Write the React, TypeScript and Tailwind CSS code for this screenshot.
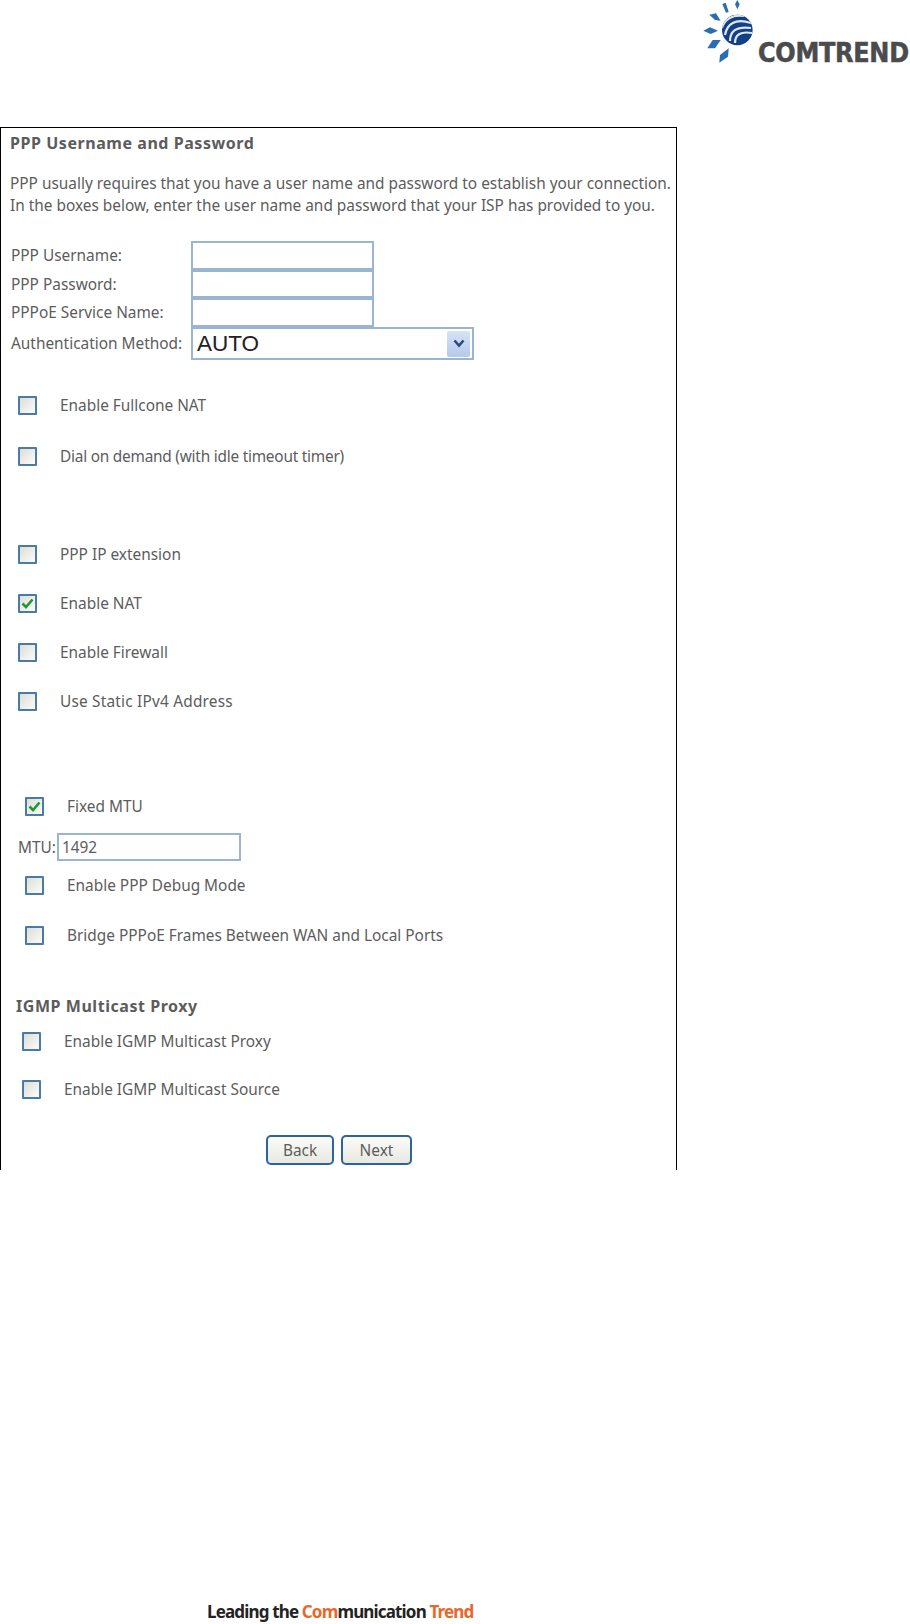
const FONT = "font-['Noto_Sans',sans-serif]";

function Box({ checked }: { checked?: boolean }) {
  return (
    <div className="w-[19px] h-[19px] shrink-0 border-2 border-[#4a7aa6] rounded-[1px] bg-gradient-to-br from-[#deded8] to-[#fbfbf9] flex items-center justify-center">
      {checked && (
        <svg width="13" height="11" viewBox="0 0 13 11">
          <path d="M1.5 5.5 L5 9 L11.5 1.5" fill="none" stroke="#1f9a2e" strokeWidth="2.6" />
        </svg>
      )}
    </div>
  );
}

function CheckRow({ label, checked, className, textClass }: { label: string; checked?: boolean; className: string; textClass?: string }) {
  return (
    <div className={`h-[30px] flex items-center ${className}`}>
      <Box checked={checked} />
      <span className={`ml-[23px] pt-px ${textClass ?? ""}`}>{label}</span>
    </div>
  );
}

function Field({ className }: { className?: string }) {
  return (
    <input
      readOnly
      className={`block bg-white border-2 border-[#9ab5d2] outline-none ${className ?? ""}`}
    />
  );
}

function Btn({ label, className }: { label: string; className: string }) {
  return (
    <div
      className={`h-[30px] pt-[2px] flex items-center justify-center rounded-[5px] border-2 border-[#2f6496] bg-gradient-to-b from-[#fafaf8] to-[#e9e9e2] ${className}`}
    >
      {label}
    </div>
  );
}

function Sun() {
  return (
    <svg width="56" height="66" viewBox="0 0 56 66" className="shrink-0">
      <defs>
        <clipPath id="globe">
          <circle cx="35.3" cy="30" r="15.3" />
        </clipPath>
      </defs>
      <g fill="#2a6db5">
        <polygon points="35.3,0 37.7,4.3 35.3,9.3 33,4.3" />
        <polygon points="20.3,4 23.7,2.7 26.7,12 24,12.7" />
        <polygon points="7.3,14.7 14,13.3 18.7,20.7 13,20" />
        <polygon points="1.3,30.7 8,27.3 16,30.7 8.7,34" />
        <polygon points="5.3,48.3 10.7,40 18.7,40 13,48.3" />
        <polygon points="17.3,62.7 18,55 26.7,48.3 26,56.7" />
      </g>
      <circle cx="35.3" cy="30" r="15.3" fill="#123f86" />
      <g clipPath="url(#globe)" fill="none" stroke="#dfe6ee" strokeWidth="2.2">
        <path d="M23 35 C25 24 33 18 49 23" />
        <path d="M28 41 C28 32 33 26 49 28" />
        <path d="M33 43 C33 35 38 31 50 33" />
        <path d="M20 28 C22 20 30 14 42 16" />
      </g>
    </svg>
  );
}

export default function App() {
  return (
    <div className={`w-[910px] h-[1624px] overflow-hidden bg-white text-[15.4px] leading-[20px] text-[#5c5c5c] ${FONT}`}>
      <header className="h-[127px] flex justify-end items-start">
        <Sun />
        <div className="w-[152px] mt-[39px] text-[#4b4b4d] text-[24px] leading-[28px] font-bold font-['DejaVu_Sans',sans-serif] tracking-[-0.3px] [-webkit-text-stroke:0.5px_#4b4b4d] scale-y-[1.14] whitespace-nowrap">
          COMTREND
        </div>
      </header>

      <main className="w-[677px] h-[1043px] border-l border-t border-r border-black">
        <div className="h-[28px] pt-px pl-[9px] flex items-center font-bold text-[16px] tracking-[0.55px]">PPP Username and Password</div>
        <p className="mt-[17px] pl-[9px] leading-[22px] whitespace-nowrap">
          PPP usually requires that you have a user name and password to establish your connection.
          <br />
          In the boxes below, enter the user name and password that your ISP has provided to you.
        </p>

        <div className="mt-[24px] pl-[10px] grid grid-cols-[180px_auto] justify-start">
          <div className="h-[29px] pt-px flex items-center">PPP Username:</div>
          <Field className="w-[183px] h-[29px]" />
          <div className="h-[28px] pt-px flex items-center">PPP Password:</div>
          <Field className="w-[183px] h-[28px]" />
          <div className="h-[29px] pt-px flex items-center">PPPoE Service Name:</div>
          <Field className="w-[183px] h-[29px]" />
          <div className="h-[33px] flex items-center">Authentication Method:</div>
          <div className="w-[283px] h-[33px] border-2 border-[#9ab5d2] bg-white flex items-center justify-between pl-[4px] pr-[2px]">
            <span className="text-[22.5px] leading-[28px] text-[#222] font-['Liberation_Sans',sans-serif]">AUTO</span>
            <div className="w-[23px] h-[26px] rounded-[2px] bg-gradient-to-b from-[#d7e2f6] to-[#b6c9ec] flex items-center justify-center">
              <svg width="12" height="9" viewBox="0 0 12 9">
                <path d="M1.5 1.5 L6 6.5 L10.5 1.5" fill="none" stroke="#2c4a78" strokeWidth="2.6" />
              </svg>
            </div>
          </div>
        </div>

        <CheckRow label="Enable Fullcone NAT" className="mt-[30px] pl-[17px]" />
        <CheckRow label="Dial on demand (with idle timeout timer)" className="mt-[21px] pl-[17px]" textClass="tracking-[-0.23px]" />
        <CheckRow label="PPP IP extension" className="mt-[68px] pl-[17px]" />
        <CheckRow label="Enable NAT" checked className="mt-[19px] pl-[17px]" />
        <CheckRow label="Enable Firewall" className="mt-[19px] pl-[17px]" />
        <CheckRow label="Use Static IPv4 Address" className="mt-[19px] pl-[17px]" textClass="tracking-[0.2px]" />
        <CheckRow label="Fixed MTU" checked className="mt-[75px] pl-[24px]" />

        <div className="mt-[11px] h-[30px] pl-[17px] flex items-center">
          <span className="pt-px">MTU:</span>
          <input
            readOnly
            value="1492"
            className="ml-[1px] w-[184px] h-[28px] bg-white border-2 border-[#9ab5d2] outline-none pl-[3px] text-[#5c5c5c]"
          />
        </div>

        <CheckRow label="Enable PPP Debug Mode" className="mt-[8px] pl-[24px]" />
        <CheckRow label="Bridge PPPoE Frames Between WAN and Local Ports" className="mt-[20px] pl-[24px]" />

        <div className="mt-[40px] h-[30px] pt-px pl-[15px] flex items-center font-bold text-[16px] tracking-[0.55px]">IGMP Multicast Proxy</div>
        <CheckRow label="Enable IGMP Multicast Proxy" className="mt-[6px] pl-[21px]" />
        <CheckRow label="Enable IGMP Multicast Source" className="mt-[18px] pl-[21px]" />

        <div className="mt-[31px] pl-[265px] flex gap-[7px]">
          <Btn label="Back" className="w-[68px]" />
          <Btn label="Next" className="w-[71px]" />
        </div>
      </main>

      <footer className="mt-[430px] pl-[207px] text-[17px] leading-[24px] tracking-[-0.84px] font-bold text-[#232323] whitespace-nowrap">
        Leading the <span className="text-[#e8682a]">Com</span>munication <span className="text-[#e8682a]">Trend</span>
      </footer>
    </div>
  );
}
